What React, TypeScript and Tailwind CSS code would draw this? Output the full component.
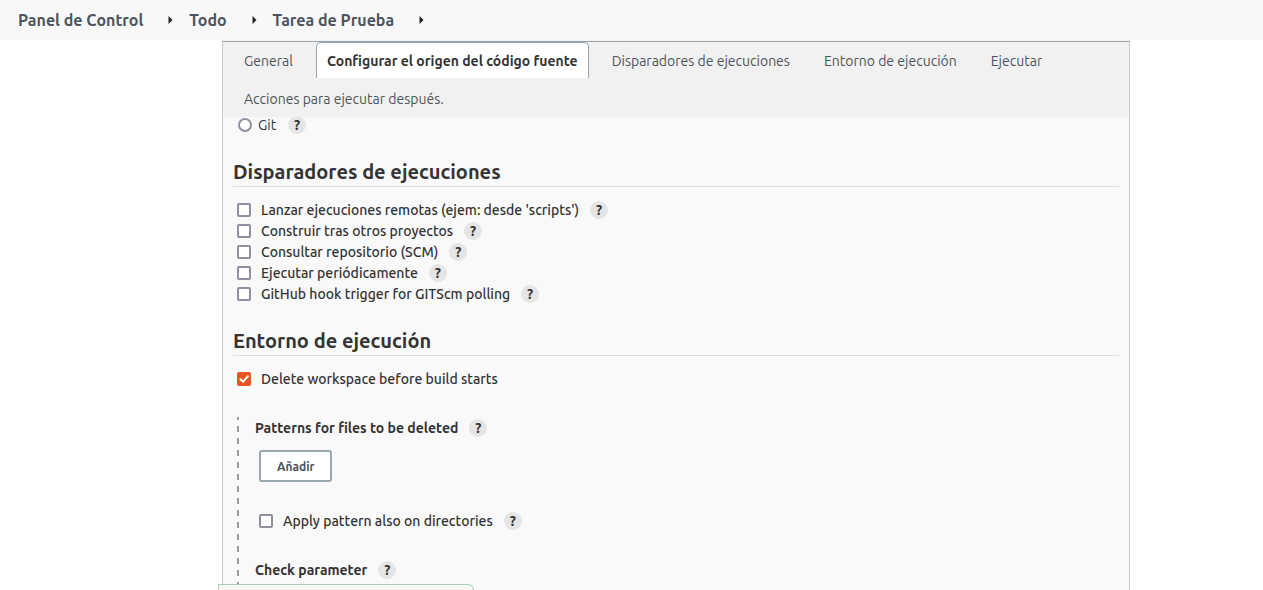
import type { ReactNode } from "react";

function Help({ topic }: { topic: string }) {
  return (
    <button
      type="button"
      aria-label={`Ayuda: ${topic}`}
      className="flex size-[18px] shrink-0 items-center justify-center rounded-full bg-[#e5e5e5] text-[14px] leading-[18px] font-bold text-[#333333]"
    >
      ?
    </button>
  );
}

function CheckRow({
  id,
  label,
  checked = false,
  help = true,
}: {
  id: string;
  label: string;
  checked?: boolean;
  help?: boolean;
}) {
  return (
    <div className="flex h-[21px] items-center pl-1">
      <span className="relative flex size-[14px] shrink-0">
        <input
          id={id}
          type="checkbox"
          defaultChecked={checked}
          className="peer size-[14px] appearance-none rounded-[2px] border-2 border-[#8f8f9d] bg-white checked:border-[#e95420] checked:bg-[#e95420]"
        />
        <svg
          viewBox="0 0 14 14"
          className="pointer-events-none absolute inset-0 hidden size-[14px] peer-checked:block"
          fill="none"
          stroke="white"
          strokeWidth="2"
          strokeLinecap="round"
          strokeLinejoin="round"
        >
          <path d="M3.5 7.3 6 9.8 11 4.2" />
        </svg>
      </span>
      <label htmlFor={id} className="ml-[10px] pt-px leading-5 font-medium">
        {label}
      </label>
      {help && (
        <span className="ml-[11px]">
          <Help topic={label} />
        </span>
      )}
    </div>
  );
}

function SectionTitle({ children }: { children: ReactNode }) {
  return (
    <h2 className="border-b border-[#dddddd] pt-px text-[20px] leading-7 font-bold">
      {children}
    </h2>
  );
}

const crumbs = ["Panel de Control", "Todo", "Tarea de Prueba"];

const tabs = [
  "General",
  "Configurar el origen del código fuente",
  "Disparadores de ejecuciones",
  "Entorno de ejecución",
  "Ejecutar",
  "Acciones para ejecutar después.",
];

const triggers = [
  "Lanzar ejecuciones remotas (ejem: desde 'scripts')",
  "Construir tras otros proyectos",
  "Consultar repositorio (SCM)",
  "Ejecutar periódicamente",
  "GitHub hook trigger for GITScm polling",
];

export default function App() {
  return (
    <div className="flex h-screen flex-col overflow-hidden bg-white font-['Ubuntu','Noto_Sans',sans-serif] text-[14px] leading-[21px] text-[#333333]">
      <nav className="h-10 shrink-0 bg-[#f8f8f8] pl-[18px]">
        <ol className="flex h-10 items-center text-[16px] font-bold text-[#4d545d]">
          {crumbs.map((crumb) => (
            <li key={crumb} className="flex items-center">
              <a href="#">{crumb}</a>
              <svg viewBox="0 0 5 8" className="mr-4 ml-[25px] h-2 w-[5px]" fill="#222222">
                <path d="M0.5 0v8L4.5 4z" />
              </svg>
            </li>
          ))}
        </ol>
      </nav>

      <main className="mr-[133px] ml-[222px] min-h-0 flex-1 overflow-hidden border-x border-[#c2ccd1] bg-[#f9f9f9]">
        <div className="relative z-10 bg-[#f1f1f1] pt-px">
          <div className="flex flex-wrap gap-x-3 border-t border-[#9aa5ab] px-[10px]">
            {tabs.map((tab, i) => (
              <button
                key={tab}
                type="button"
                className={
                  i === 1
                    ? "mb-[2px] h-9 rounded-t-[5px] border border-b-0 border-[#98a6ad] bg-white px-[10px] pt-px font-bold"
                    : "mb-px h-9 border-x border-transparent px-[10px] pt-[2px] text-[#4d545d]"
                }
              >
                {tab}
              </button>
            ))}
          </div>
        </div>

        <form className="px-[10px]">
          <div className="flex h-4 items-center pl-[5px]">
            <input
              id="scm-git"
              name="scm"
              type="radio"
              className="size-[14px] shrink-0 appearance-none rounded-full border-2 border-[#8f8f9d] bg-white"
            />
            <label htmlFor="scm-git" className="mr-3 ml-[6px]">
              Git
            </label>
            <Help topic="Git" />
          </div>

          <section className="pt-6">
            <SectionTitle>Disparadores de ejecuciones</SectionTitle>
            <div className="pt-3">
              {triggers.map((label, i) => (
                <CheckRow key={label} id={`trigger-${i}`} label={label} />
              ))}
            </div>
          </section>

          <section className="pt-[22px]">
            <SectionTitle>Entorno de ejecución</SectionTitle>
            <div className="pt-3">
              <CheckRow id="delete-ws" label="Delete workspace before build starts" checked help={false} />
            </div>
            <div className="mt-7 ml-1 flex">
              <div className="w-[2px] shrink-0 bg-[repeating-linear-gradient(to_bottom,#999999_0_3px,transparent_3px_9px,#999999_9px_12px)]" />
              <div className="min-w-0 flex-1 pb-10 pl-4">
                <div className="flex h-[22px] items-center gap-[11px] font-bold">
                  Patterns for files to be deleted
                  <Help topic="Patterns for files to be deleted" />
                </div>
                <button
                  type="button"
                  className="mt-[11px] ml-1 block h-8 rounded-[3px] border-2 border-[#98a6ad] bg-white px-4 pt-px text-[12px] leading-7 font-bold text-[#4d545d]"
                >
                  Añadir
                </button>
                <div className="pt-7">
                  <CheckRow id="apply-dirs" label="Apply pattern also on directories" />
                </div>
                <div className="mt-7 flex h-[22px] items-center gap-[11px] font-bold">
                  Check parameter
                  <Help topic="Check parameter" />
                </div>
              </div>
            </div>
          </section>
        </form>
      </main>

      <div className="fixed bottom-0 left-[218px] h-[6px] w-[256px] rounded-tr-[10px] border-t border-r border-l border-[#a5cdb8] bg-[#f6f8f2]" />
    </div>
  );
}
